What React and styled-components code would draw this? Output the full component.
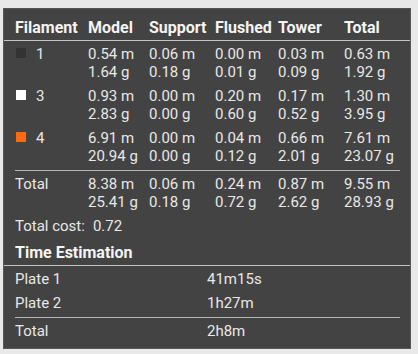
import styled, { createGlobalStyle } from "styled-components"

const GlobalStyle = createGlobalStyle`
  html, body {
    margin: 0;
    padding: 0;
    background: #e9e9e9;
  }
  body {
    font-family: Roboto, "Liberation Sans", sans-serif;
    font-size: 15px;
    line-height: 18px;
  }
`

const filaments = [
  { id: "1", color: "#333333", model: ["0.54 m", "1.64 g"], support: ["0.06 m", "0.18 g"], flushed: ["0.00 m", "0.01 g"], tower: ["0.03 m", "0.09 g"], total: ["0.63 m", "1.92 g"] },
  { id: "3", color: "#ffffff", model: ["0.93 m", "2.83 g"], support: ["0.00 m", "0.00 g"], flushed: ["0.20 m", "0.60 g"], tower: ["0.17 m", "0.52 g"], total: ["1.30 m", "3.95 g"] },
  { id: "4", color: "#ff6a10", model: ["6.91 m", "20.94 g"], support: ["0.00 m", "0.00 g"], flushed: ["0.04 m", "0.12 g"], tower: ["0.66 m", "2.01 g"], total: ["7.61 m", "23.07 g"] },
]

const totals = { model: ["8.38 m", "25.41 g"], support: ["0.06 m", "0.18 g"], flushed: ["0.24 m", "0.72 g"], tower: ["0.87 m", "2.62 g"], total: ["9.55 m", "28.93 g"] }

const plates = [
  { name: "Plate 1", time: "41m15s" },
  { name: "Plate 2", time: "1h27m" },
]

const Cell = ({ lines }) => (
  <Stack>
    {lines.map((l) => (
      <span key={l}>{l}</span>
    ))}
  </Stack>
)

export default function App() {
  return (
    <>
      <GlobalStyle />
      <Panel>
        <HeaderRow>
          <span>Filament</span>
          <span>Model</span>
          <span>Support</span>
          <span>Flushed</span>
          <span>Tower</span>
          <span>Total</span>
        </HeaderRow>
        {filaments.map((f, i) => (
          <Row key={f.id} $top={i === 0 ? 4 : 6}>
            <FilamentName>
              <Swatch $color={f.color} />
              {f.id}
            </FilamentName>
            <Cell lines={f.model} />
            <Cell lines={f.support} />
            <Cell lines={f.flushed} />
            <Cell lines={f.tower} />
            <Cell lines={f.total} />
          </Row>
        ))}
        <Divider $top={5} />
        <Row $top={4}>
          <span>Total</span>
          <Cell lines={totals.model} />
          <Cell lines={totals.support} />
          <Cell lines={totals.flushed} />
          <Cell lines={totals.tower} />
          <Cell lines={totals.total} />
        </Row>
        <CostLine>
          Total cost:<CostValue>0.72</CostValue>
        </CostLine>
        <SectionTitle>Time Estimation</SectionTitle>
        {plates.map((p, i) => (
          <TimeRow key={p.name} $top={i === 0 ? 4 : 6}>
            <span>{p.name}</span>
            <span>{p.time}</span>
          </TimeRow>
        ))}
        <Divider $top={5} />
        <TimeRow $top={4}>
          <span>Total</span>
          <span>2h8m</span>
        </TimeRow>
      </Panel>
    </>
  )
}

const Panel = styled.div`
  box-sizing: border-box;
  margin: 8px 0 0 3px;
  width: 408px;
  height: 341px;
  background: #434343;
  border: 1px solid #575757;
  color: #e8e8e8;
`

const columns = `73px 61px 66px 63px 66px 1fr`

const HeaderRow = styled.div`
  display: grid;
  grid-template-columns: ${columns};
  padding: 10px 11px 3px;
  border-bottom: 1px solid #c4c4c4;
  font-size: 16px;
  font-weight: 700;
  color: #f4f4f4;
  white-space: nowrap;
`

const Row = styled.div`
  display: grid;
  grid-template-columns: ${columns};
  padding: 0 11px;
  margin-top: ${(p) => p.$top}px;
`

const Stack = styled.div`
  display: flex;
  flex-direction: column;
  white-space: nowrap;
`

const FilamentName = styled.div`
  display: flex;
  align-items: flex-start;
`

const Swatch = styled.span`
  width: 10px;
  height: 10px;
  margin: 3px 10px 0 1px;
  background: ${(p) => p.$color};
`

const Divider = styled.div`
  height: 1px;
  margin: ${(p) => p.$top}px 10px 0 11px;
  background: #b4b4b4;
`

const CostLine = styled.div`
  padding: 0 11px;
  margin-top: 6px;
`

const CostValue = styled.span`
  margin-left: 8px;
`

const SectionTitle = styled.div`
  margin-top: 9px;
  padding: 0 11px 3px;
  border-bottom: 1px solid #c4c4c4;
  font-size: 16px;
  font-weight: 700;
  color: #f4f4f4;
`

const TimeRow = styled.div`
  display: grid;
  grid-template-columns: 192px 1fr;
  padding: 0 11px;
  margin-top: ${(p) => p.$top}px;
`
